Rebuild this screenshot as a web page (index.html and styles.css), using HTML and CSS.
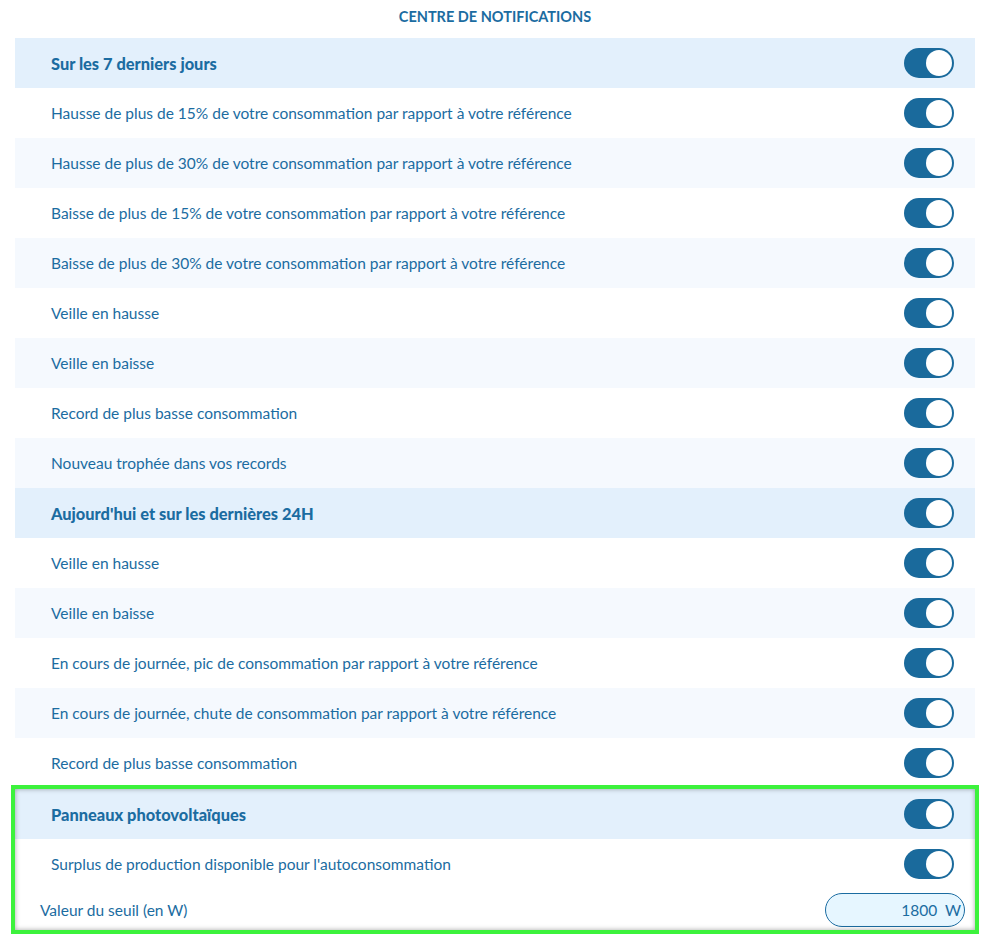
FILE: index.html
```html
<!DOCTYPE html>
<html lang="fr">
<head>
  <meta charset="UTF-8">
  <title>Centre de notifications</title>
  <link rel="stylesheet" href="styles.css">
</head>
<body>
<div class="page">
  <div class="page-title">CENTRE DE NOTIFICATIONS</div>

  <div class="notif-list">
    <div class="notif-row section">
      <span>Sur les 7 derniers jours</span>
      <span class="switch"><span class="knob"></span></span>
    </div>
    <div class="notif-row">
      <span>Hausse de plus de 15% de votre consommation par rapport à votre référence</span>
      <span class="switch"><span class="knob"></span></span>
    </div>
    <div class="notif-row alt">
      <span>Hausse de plus de 30% de votre consommation par rapport à votre référence</span>
      <span class="switch"><span class="knob"></span></span>
    </div>
    <div class="notif-row">
      <span>Baisse de plus de 15% de votre consommation par rapport à votre référence</span>
      <span class="switch"><span class="knob"></span></span>
    </div>
    <div class="notif-row alt">
      <span>Baisse de plus de 30% de votre consommation par rapport à votre référence</span>
      <span class="switch"><span class="knob"></span></span>
    </div>
    <div class="notif-row">
      <span>Veille en hausse</span>
      <span class="switch"><span class="knob"></span></span>
    </div>
    <div class="notif-row alt">
      <span>Veille en baisse</span>
      <span class="switch"><span class="knob"></span></span>
    </div>
    <div class="notif-row">
      <span>Record de plus basse consommation</span>
      <span class="switch"><span class="knob"></span></span>
    </div>
    <div class="notif-row alt">
      <span>Nouveau trophée dans vos records</span>
      <span class="switch"><span class="knob"></span></span>
    </div>

    <div class="notif-row section">
      <span>Aujourd'hui et sur les dernières 24H</span>
      <span class="switch"><span class="knob"></span></span>
    </div>
    <div class="notif-row">
      <span>Veille en hausse</span>
      <span class="switch"><span class="knob"></span></span>
    </div>
    <div class="notif-row alt">
      <span>Veille en baisse</span>
      <span class="switch"><span class="knob"></span></span>
    </div>
    <div class="notif-row">
      <span>En cours de journée, pic de consommation par rapport à votre référence</span>
      <span class="switch"><span class="knob"></span></span>
    </div>
    <div class="notif-row alt">
      <span>En cours de journée, chute de consommation par rapport à votre référence</span>
      <span class="switch"><span class="knob"></span></span>
    </div>
    <div class="notif-row">
      <span>Record de plus basse consommation</span>
      <span class="switch"><span class="knob"></span></span>
    </div>

    <div class="solar-block">
      <div class="notif-row section">
        <span>Panneaux photovoltaïques</span>
        <span class="switch"><span class="knob"></span></span>
      </div>
      <div class="notif-row">
        <span>Surplus de production disponible pour l'autoconsommation</span>
        <span class="switch"><span class="knob"></span></span>
      </div>
      <div class="threshold-row">
        <span>Valeur du seuil (en W)</span>
        <div class="threshold-input">1800&nbsp; W</div>
      </div>
    </div>
  </div>
</div>
</body>
</html>
```

FILE: styles.css
```css
html, body {
  overflow: hidden;
}
body {
  margin: 0;
  background-color: white;
  color: #1b6ca1;
  font-family: Lato, "Open Sans", sans-serif;
}
.page {
  width: 981px;
}
.page-title {
  text-align: center;
  font-size: 14.5px;
  font-weight: bold;
  height: 38px;
  line-height: 33px;
  padding-left: 9px;
}
.notif-list {
  margin: 0 6px 0 15px;
}
.notif-row {
  display: flex;
  align-items: center;
  justify-content: space-between;
  height: 50px;
  padding: 0 21px 0 36px;
  font-size: 15.5px;
  background-color: white;
}
.notif-row.alt {
  background-color: #f5f9fe;
}
.notif-row.section {
  background-color: #e3f0fc;
  font-weight: 900;
  font-size: 16.4px;
}
.switch {
  position: relative;
  width: 50px;
  height: 30px;
  border-radius: 15px;
  background-color: #1a6a9c;
  flex-shrink: 0;
}
.knob {
  position: absolute;
  top: 2px;
  right: 2px;
  width: 26px;
  height: 26px;
  border-radius: 50%;
  background-color: white;
}
.solar-block {
  position: relative;
  border: 4px solid #3cf23c;
  margin: -3px -4px 0;
}
.solar-block::after {
  content: "";
  position: absolute;
  top: 0;
  left: 0;
  right: 0;
  bottom: 0;
  box-shadow: inset 0 0 5px rgba(0, 0, 0, 0.35);
  pointer-events: none;
}
.threshold-row {
  display: flex;
  align-items: center;
  justify-content: space-between;
  height: 41px;
  padding: 0 10px 0 25px;
  font-size: 15.5px;
}
.threshold-input {
  width: 140px;
  height: 34px;
  box-sizing: border-box;
  border: 1px solid #1b6ca1;
  border-radius: 17px;
  background-color: #e6f6ff;
  text-align: right;
  line-height: 32px;
  padding-right: 3px;
  font-size: 15.5px;
}
```
